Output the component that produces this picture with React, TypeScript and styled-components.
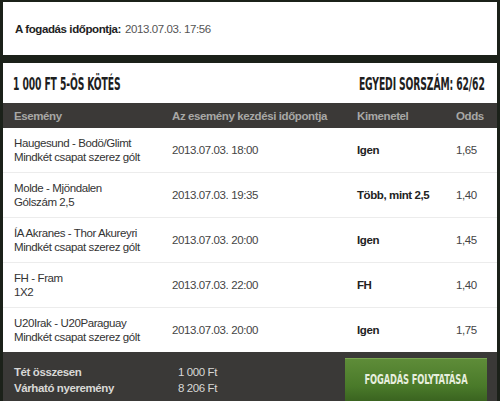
import React from "react";
import styled, { createGlobalStyle } from "styled-components";

interface Bet {
  event: string;
  market: string;
  start: string;
  outcome: string;
  odds: string;
}

const bets: Bet[] = [
  { event: "Haugesund - Bodö/Glimt", market: "Mindkét csapat szerez gólt", start: "2013.07.03. 18:00", outcome: "Igen", odds: "1,65" },
  { event: "Molde - Mjöndalen", market: "Gólszám 2,5", start: "2013.07.03. 19:35", outcome: "Több, mint 2,5", odds: "1,40" },
  { event: "ÍA Akranes - Thor Akureyri", market: "Mindkét csapat szerez gólt", start: "2013.07.03. 20:00", outcome: "Igen", odds: "1,45" },
  { event: "FH - Fram", market: "1X2", start: "2013.07.03. 22:00", outcome: "FH", odds: "1,40" },
  { event: "U20Irak - U20Paraguay", market: "Mindkét csapat szerez gólt", start: "2013.07.03. 20:00", outcome: "Igen", odds: "1,75" },
];

const GlobalStyle = createGlobalStyle`
  html, body {
    margin: 0;
    padding: 0;
    background: #1b2119;
    overflow: hidden;
  }
  body {
    font-family: "Liberation Sans", Arial, sans-serif;
    font-size: 11.5px;
    letter-spacing: -0.4px;
    color: #333;
  }
`;

const Page = styled.div`
  width: 500px;
  height: 401px;
  box-sizing: border-box;
  padding: 2px 3px 0 3px;
  display: flex;
  flex-direction: column;
  gap: 8px;
  overflow: hidden;
  & > * {
    flex-shrink: 0;
  }
`;

const InfoCard = styled.div`
  background: #fff;
  height: 53px;
  display: flex;
  align-items: center;
  padding: 0 12px;
  color: #555;
`;

const InfoLabel = styled.b`
  color: #222;
  margin-right: 4px;
`;

const SlipCard = styled.div`
  background: #fff;
  display: flex;
  flex-direction: column;
`;

const SlipHeader = styled.div`
  height: 40px;
  display: flex;
  align-items: center;
  justify-content: space-between;
  padding: 0 12px 0 10px;
`;

const Condensed = styled.span<{ $size: number; $squeeze: number; $origin: string; $color: string }>`
  display: inline-block;
  font-family: "DejaVu Sans Condensed", sans-serif;
  font-weight: bold;
  font-size: ${(p) => p.$size}px;
  color: ${(p) => p.$color};
  white-space: nowrap;
  transform: scaleX(${(p) => p.$squeeze});
  transform-origin: ${(p) => p.$origin};
  letter-spacing: -0.2px;
`;

const Grid = styled.div`
  display: grid;
  grid-template-columns: 158px 185px 99px 1fr;
  padding-left: 11px;
  align-items: center;
`;

const HeadRow = styled(Grid)`
  height: 25px;
  background: #3b3937;
  color: #a8a8a6;
  font-weight: bold;
  font-size: 11.5px;
`;

const BetRow = styled(Grid)`
  height: 44px;
  border-top: 1px solid #ececec;
  &:first-of-type {
    border-top: none;
  }
`;

const EventCell = styled.div`
  line-height: 14px;
  color: #333;
`;

const Plain = styled.div`
  color: #444;
`;

const Outcome = styled.div`
  font-weight: bold;
  color: #222;
`;

const Footer = styled.div`
  background: #3a3937;
  height: 60px;
  display: flex;
  justify-content: space-between;
  padding: 6px 10px 0 11px;
  box-sizing: border-box;
`;

const Totals = styled.div`
  display: grid;
  grid-template-columns: 164px auto;
  row-gap: 2px;
  padding-top: 7px;
  line-height: 14px;
  color: #d8d8d6;
  align-content: start;
`;

const TotalLabel = styled.div`
  font-weight: bold;
`;

const ContinueButton = styled.button`
  width: 142px;
  height: 50px;
  border: none;
  border-top: 1px solid #7aa552;
  background: linear-gradient(#5e8c38, #4a7a2a 55%, #33591b);
  padding: 0 0 10px 0;
  display: flex;
  align-items: center;
  justify-content: center;
  cursor: pointer;
`;

export default function App() {
  return (
    <>
      <GlobalStyle />
      <Page>
        <InfoCard>
          <InfoLabel>A fogadás időpontja:</InfoLabel>2013.07.03. 17:56
        </InfoCard>
        <SlipCard>
          <SlipHeader>
            <Condensed $size={18} $squeeze={0.57} $origin="left" $color="#1e1e1e">
              1 000 FT 5-ÖS KÖTÉS
            </Condensed>
            <Condensed $size={18} $squeeze={0.57} $origin="right" $color="#1e1e1e">
              EGYEDI SORSZÁM: 62/62
            </Condensed>
          </SlipHeader>
          <HeadRow>
            <div>Esemény</div>
            <div>Az esemény kezdési időpontja</div>
            <div>Kimenetel</div>
            <div>Odds</div>
          </HeadRow>
          <div>
            {bets.map((b) => (
              <BetRow key={b.event}>
                <EventCell>
                  {b.event}
                  <br />
                  {b.market}
                </EventCell>
                <Plain>{b.start}</Plain>
                <Outcome>{b.outcome}</Outcome>
                <Plain>{b.odds}</Plain>
              </BetRow>
            ))}
          </div>
          <Footer>
            <Totals>
              <TotalLabel>Tét összesen</TotalLabel>
              <div>1 000 Ft</div>
              <TotalLabel>Várható nyeremény</TotalLabel>
              <div>8 206 Ft</div>
            </Totals>
            <ContinueButton>
              <Condensed $size={14} $squeeze={0.66} $origin="center" $color="#e6eede">
                FOGADÁS FOLYTATÁSA
              </Condensed>
            </ContinueButton>
          </Footer>
        </SlipCard>
      </Page>
    </>
  );
}
